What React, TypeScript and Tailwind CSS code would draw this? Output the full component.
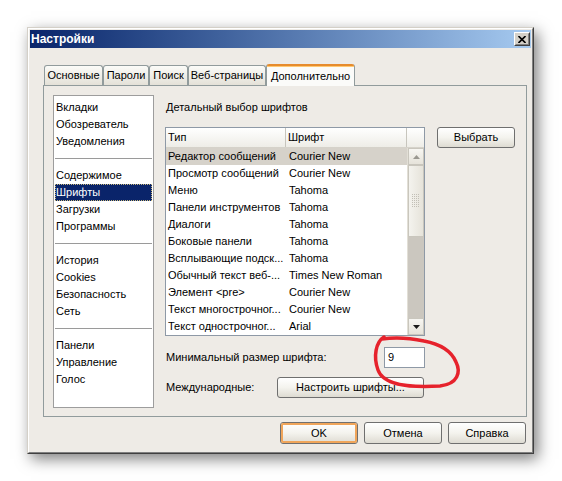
import React from "react";

const groups: string[][] = [
  ["Вкладки", "Обозреватель", "Уведомления"],
  ["Содержимое", "Шрифты", "Загрузки", "Программы"],
  ["История", "Cookies", "Безопасность", "Сеть"],
  ["Панели", "Управление", "Голос"],
];

const rows: [string, string][] = [
  ["Редактор сообщений", "Courier New"],
  ["Просмотр сообщений", "Courier New"],
  ["Меню", "Tahoma"],
  ["Панели инструментов", "Tahoma"],
  ["Диалоги", "Tahoma"],
  ["Боковые панели", "Tahoma"],
  ["Всплывающие подск...", "Tahoma"],
  ["Обычный текст веб-...", "Times New Roman"],
  ["Элемент <pre>", "Courier New"],
  ["Текст многострочног...", "Courier New"],
  ["Текст однострочног...", "Arial"],
];

const tabs: { label: string; w: string; active?: boolean }[] = [
  { label: "Основные", w: "w-[59px]" },
  { label: "Пароли", w: "w-[46px]" },
  { label: "Поиск", w: "w-[39px]" },
  { label: "Веб-страницы", w: "w-[78px]" },
  { label: "Дополнительно", w: "w-[89px]", active: true },
];

function Btn({
  children,
  className = "",
  focus = false,
}: {
  children: React.ReactNode;
  className?: string;
  focus?: boolean;
}) {
  return (
    <div
      className={`flex items-center justify-center whitespace-nowrap rounded-[3px] border border-[#6f6f6f] bg-linear-to-b from-[#ffffff] via-[#f4f3ee] to-[#dedbd2] ${className}`}
    >
      <div
        className={`flex h-full w-full items-center justify-center rounded-[2px] ${
          focus ? "border-2 border-[#f0a55a]" : "border-2 border-transparent"
        }`}
      >
        {children}
      </div>
    </div>
  );
}

export default function App() {
  return (
    <div className="relative h-[481px] w-[562px] overflow-hidden bg-white pl-[27px] pt-[27px] font-['Liberation_Sans',Arial,sans-serif] text-[11px] text-black">
      {/* dialog */}
      <div className="h-[427px] w-[507px] border border-b-[#404040] border-l-[#d4d0c8] border-r-[#404040] border-t-[#d4d0c8] bg-[#eeebe6] shadow-[4px_5px_14px_rgba(0,0,0,0.5)]">
        <div className="flex h-full w-full flex-col border border-b-[#808080] border-l-white border-r-[#808080] border-t-white p-px">
          {/* title bar */}
          <div className="flex h-[18px] items-start justify-between bg-linear-to-r from-[#0a246a] to-[#a6caf0] pl-[1px] pr-px">
            <span className="text-[12px] font-bold leading-[18px] text-white">
              Настройки
            </span>
            <div className="mt-[2px] h-[14px] w-[16px] border border-b-[#404040] border-l-white border-r-[#404040] border-t-white bg-[#d4d0c8]">
              <div className="flex h-full w-full items-center justify-center border border-b-[#808080] border-l-[#d4d0c8] border-r-[#808080] border-t-[#d4d0c8]">
                <svg width="8" height="7" viewBox="0 0 8 7">
                  <path d="M0.5 0 L7.5 7 M7.5 0 L0.5 7" stroke="#000" strokeWidth="1.6" />
                </svg>
              </div>
            </div>
          </div>

          {/* body */}
          <div className="flex flex-1 flex-col pl-[13px] pr-[2px] pt-[16px]">
            {/* tabs */}
            <div className="relative z-10 flex h-[21px] items-end pl-px">
              {tabs.map((t) =>
                t.active ? (
                  <div
                    key={t.label}
                    className={`${t.w} -mb-px flex h-[22px] flex-col rounded-t-[3px] border-x border-[#919b9c] bg-[#fbfbf9]`}
                  >
                    <div className="h-[3px] rounded-t-[2px] border-t-2 border-[#e68b2c] bg-[#ffc873]" />
                    <div className="flex flex-1 items-center justify-center whitespace-nowrap leading-none">
                      {t.label}
                    </div>
                  </div>
                ) : (
                  <div
                    key={t.label}
                    className={`${t.w} flex h-[20px] items-center justify-center whitespace-nowrap rounded-t-[3px] border-x border-t border-[#919b9c] bg-linear-to-b from-[#fbfbf8] to-[#e4e1d8] leading-none`}
                  >
                    {t.label}
                  </div>
                )
              )}
            </div>

            {/* panel */}
            <div className="flex h-[332px] w-[484px] border border-[#919b9c] pl-[9px] pt-[9px]">
              {/* left list */}
              <div className="h-[313px] w-[101px] border border-[#9d9d9d] bg-white px-px pt-[3px]">
                {groups.map((g, gi) => (
                  <div key={gi}>
                    {gi > 0 && (
                      <div className="flex h-[17px] items-center">
                        <div className="h-px w-full bg-[#9a9a9a]" />
                      </div>
                    )}
                    {g.map((item) =>
                      item === "Шрифты" ? (
                        <div
                          key={item}
                          className="h-[17px] border border-dotted border-[#c9b87a] bg-[#0a246a] pl-0 leading-[15px] text-white"
                        >
                          {item}
                        </div>
                      ) : (
                        <div key={item} className="h-[17px] pl-px leading-[17px]">
                          {item}
                        </div>
                      )
                    )}
                  </div>
                ))}
              </div>

              {/* right column */}
              <div className="ml-[11px] flex w-[350px] flex-col">
                <div className="mt-[4px] h-[17px] pl-px leading-[17px]">
                  Детальный выбор шрифтов
                </div>
                <div className="mt-[11px] flex items-start gap-[12px]">
                  <div className="w-[260px]">
                    {/* table */}
                    <div className="border border-[#8e99a6] bg-white">
                      <div className="flex h-[20px] border-b border-[#d5d2ca] bg-linear-to-b from-[#ffffff] to-[#eeede7] leading-[19px]">
                        <div className="w-[120px] border-r border-[#c7c5bd] pl-[2px]">Тип</div>
                        <div className="w-[121px] border-r border-[#c7c5bd] pl-[2px]">Шрифт</div>
                        <div className="flex-1" />
                      </div>
                      <div className="flex">
                        <div className="w-[241px]">
                          {rows.map(([a, b], i) => (
                            <div
                              key={a}
                              className={`flex h-[17px] leading-[17px] ${i === 0 ? "bg-[#d6d2ca]" : ""}`}
                            >
                              <div className="w-[121px] overflow-hidden whitespace-nowrap pl-[2px]">
                                {a}
                              </div>
                              <div className="whitespace-nowrap pl-[2px]">{b}</div>
                            </div>
                          ))}
                        </div>
                        {/* scrollbar */}
                        <div className="flex w-[17px] flex-col border-l border-[#e2dfd6]">
                          <div className="flex h-[17px] items-center justify-center border border-[#c9c6bd] bg-linear-to-b from-[#f7f6f2] to-[#e6e3da]">
                            <svg width="7" height="4" viewBox="0 0 7 4">
                              <path d="M3.5 0 L7 4 L0 4 Z" fill="#9a9890" />
                            </svg>
                          </div>
                          <div className="flex h-[72px] items-center justify-center border border-[#c9c6bd] bg-linear-to-r from-[#f4f3ee] to-[#e6e3da]">
                            <svg width="8" height="14" viewBox="0 0 8 14">
                              {[0, 1, 2, 3, 4, 5, 6].map((r) =>
                                [0, 1, 2, 3].map((c) => (
                                  <rect
                                    key={`${r}-${c}`}
                                    x={c * 2}
                                    y={r * 2}
                                    width="1"
                                    height="1"
                                    fill="#c2bfb6"
                                  />
                                ))
                              )}
                            </svg>
                          </div>
                          <div className="h-[81px] bg-[#cbc7bf]" />
                          <div className="flex h-[17px] items-center justify-center border border-[#c9c6bd] bg-linear-to-b from-[#f7f6f2] to-[#e6e3da]">
                            <svg width="7" height="4" viewBox="0 0 7 4">
                              <path d="M0 0 L7 0 L3.5 4 Z" fill="#1a1a1a" />
                            </svg>
                          </div>
                        </div>
                      </div>
                    </div>

                    <div className="mt-[11px] flex h-[21px] items-center justify-between">
                      <span className="pl-px">Минимальный размер шрифта:</span>
                      <div className="flex h-[21px] w-[41px] items-center border border-[#8e99a6] bg-white pl-[3px]">
                        9
                      </div>
                    </div>
                    <div className="mt-[9px] flex h-[21px] items-center">
                      <span className="pl-px">Международные:</span>
                      <Btn className="ml-auto mr-px h-[21px] w-[147px]">Настроить шрифты...</Btn>
                    </div>
                  </div>
                  <Btn className="h-[21px] w-[78px]">Выбрать</Btn>
                </div>
              </div>
            </div>

            {/* bottom buttons */}
            <div className="mt-[5px] flex justify-end gap-[6px] pr-[3px]">
              <Btn focus className="h-[22px] w-[78px]">OK</Btn>
              <Btn className="h-[22px] w-[78px]">Отмена</Btn>
              <Btn className="h-[22px] w-[78px]">Справка</Btn>
            </div>
          </div>
        </div>
      </div>

      {/* red hand-drawn loop */}
      <svg
        className="pointer-events-none absolute left-0 top-0"
        width="562"
        height="481"
        viewBox="0 0 562 481"
      >
        <path
          d="M384 337 C 376 342, 373 356, 378 370 C 383 384, 405 388, 440 386 C 458 384, 461 372, 456 362 C 451 350, 440 344, 424 341 C 410 338, 395 337, 382 339"
          fill="none"
          stroke="#e6222c"
          strokeWidth="3.5"
          strokeLinecap="round"
        />
      </svg>
    </div>
  );
}
